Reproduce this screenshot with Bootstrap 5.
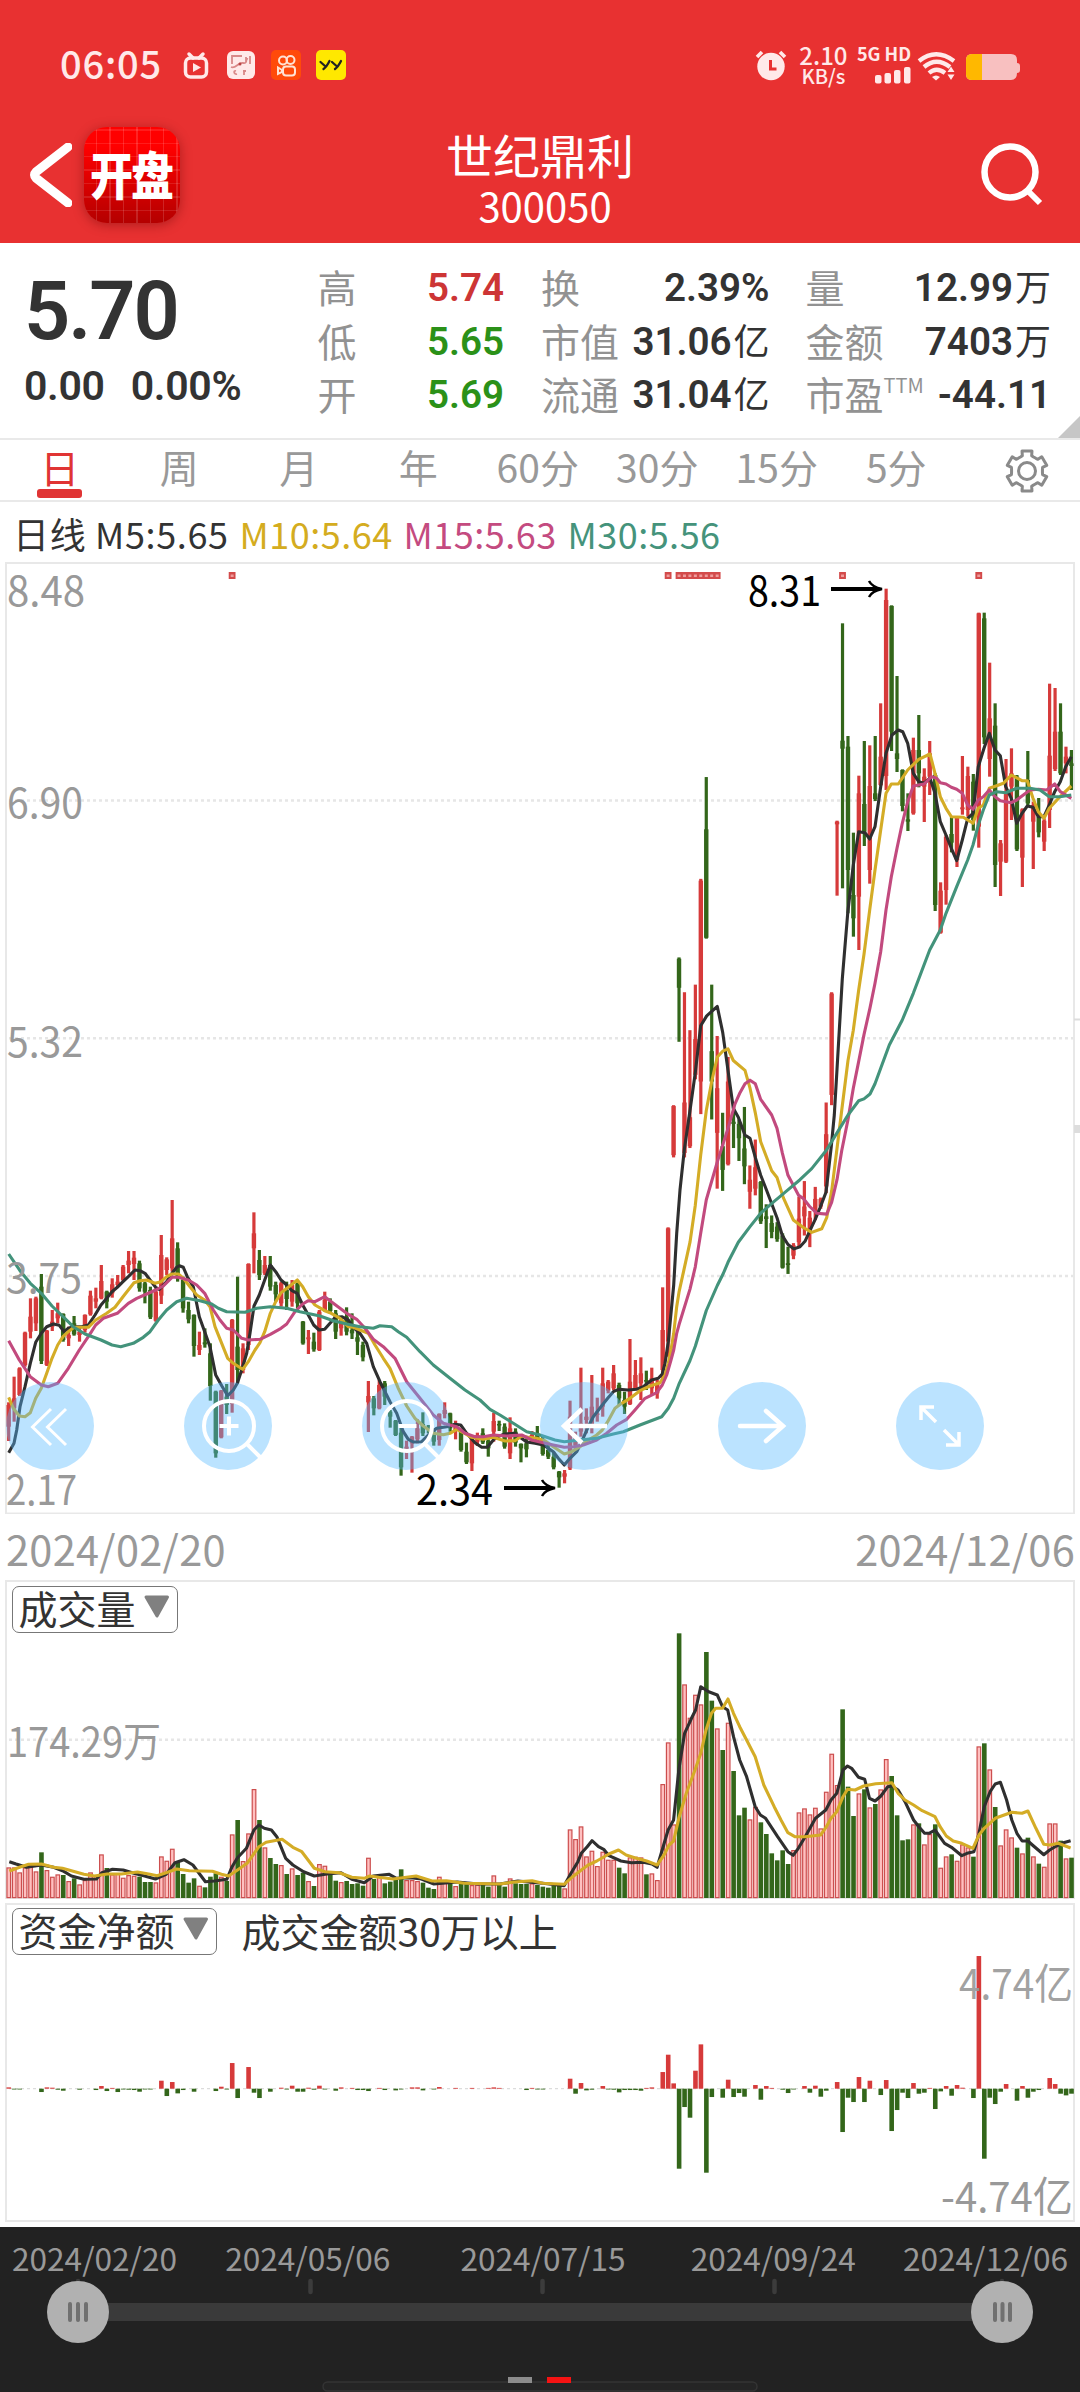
<!DOCTYPE html>
<html lang="zh-CN">
<head>
<meta charset="utf-8">
<meta name="viewport" content="width=device-width, initial-scale=1">
<title>世纪鼎利 300050</title>
<link href="https://cdn.jsdelivr.net/npm/bootstrap@5.3.0/dist/css/bootstrap.min.css" rel="stylesheet">
<style>
body{width:1080px;height:2392px;overflow:hidden;background:#fff;color:#333;font-family:"Noto Sans CJK SC","Liberation Sans",sans-serif;line-height:1}
svg{display:block;flex:none}
.app-head{height:243px;background:#e83131;color:#fff}
.status{height:86px;padding:43px 55px 0 60px;color:#ffe9e9}
.clock{font-size:38px;font-weight:500;width:123px;line-height:43px;letter-spacing:.8px;margin-top:-5px}
.net-rate{font-size:24px;font-weight:500;width:51px;text-align:center;margin-left:11px;margin-top:1px}
.net-rate div{line-height:21px}
.net-rate div+div{font-size:20px}
.net-kind{font-size:18px;font-weight:700;line-height:18px;white-space:nowrap}
.signal{gap:4px;margin-top:1px}
.wifi{margin-left:2px}
.bar-row{height:157px;padding:41px 35px 0 30px}
.logo{width:96px;height:96px;border-radius:23px;background:repeating-linear-gradient(90deg,transparent 0 12px,rgba(255,255,255,.14) 12px 13.4px),repeating-linear-gradient(0deg,transparent 0 12px,rgba(255,255,255,.11) 12px 13.4px),linear-gradient(#f00,#f00 20%,#b40000);box-shadow:0 2px 12px rgba(90,0,0,.4);font-size:43px;font-weight:900;letter-spacing:-2px;margin-left:12px}
.logo span{transform:translate(-1px,-2px) scaleY(1.18)}
.title-box{padding-right:124px;padding-left:45px}
.stock-name{font-size:47px;line-height:50px;margin-top:2px;margin-left:-2px}
.stock-code{font-size:40px;line-height:44px;margin-left:8px;margin-top:4px}
.quote{height:197px;border-bottom:2px solid #e9e9e9;padding:0 29px 0 24px}
.price-col{width:294px}
.din{font-family:Roboto,sans-serif;font-weight:600}
.last{font-size:81px;line-height:60px;margin-top:39px;letter-spacing:-2px}
.chg{font-size:41px;line-height:32px;margin-top:28px;gap:26px;letter-spacing:-.3px}
.kv-col{padding-top:17px}
.kv{height:53.5px;font-size:39px;white-space:nowrap}
.kv .key{color:#929292;line-height:40px;margin-top:-1px}
.kv .val{font-size:38.6px;line-height:40px;margin-top:3px}
.kv .val i{font:400 36px/0 "Noto Sans CJK SC",sans-serif;margin-left:2px}
.kv sup{font-size:20px;top:-.85em;line-height:0}
.up{color:#cd3535}.down{color:#2b9118}
.corner{width:0;height:0;border-left:22px solid transparent;border-bottom:22px solid #c6c6c6;right:0;bottom:0}
.periods{height:62px;border-bottom:2px solid #e9e9e9;color:#999;font-size:39px;padding-right:28px}
.periods div{width:119.5px;line-height:53px;height:60px;text-align:center;white-space:nowrap}
.periods .on{color:#e03434}
.periods .on::after{content:"";display:block;width:45px;height:9px;border-radius:3px;background:#e03434;margin:-4px auto 0}
.ma-row{height:60px;font-size:36px;padding:0 0 0 13px;gap:10.800px;white-space:nowrap;line-height:63px;letter-spacing:.5px}
.ma-row span:first-child{letter-spacing:.65px}
.dates{height:66px;color:#999;font-size:41.5px;padding:0 5px 0 6px;line-height:68px;letter-spacing:.3px}
.float-bar{left:6px;top:820px;gap:90px}
.round-btn{width:88px;height:88px;border-radius:50%;background:rgba(84,184,255,.4)}
.panel-top{left:11.5px;top:6px;gap:25px;font-size:39px}
.pick{height:47px;border:1.5px solid #777;border-radius:7px;padding:0 6px 4px 6px;gap:7px;background:#fff}
.range{height:165px;background:#222;color:#999}
.range-days{font-size:31.6px;line-height:34px;padding:13px 12px 3px 12px}
text{font-family:"Noto Sans CJK SC",sans-serif;font-size:41.5px;fill:#999}
</style>
<script src="https://cdn.jsdelivr.net/npm/bootstrap@5.3.0/dist/js/bootstrap.bundle.min.js"></script>
</head>
<body>
<header class="app-head">
  <div class="status d-flex align-items-start justify-content-between">
    <div class="d-flex align-items-center">
      <div class="clock">06:05</div>
      <svg width="163" height="44" viewBox="182 43 163 44">
        <rect x="184.500" y="58" width="21" height="19" rx="5" fill="none" stroke="#ffe9e9" stroke-width="3.500"/><path d="M188 52l4 4M202 52l-4 4" stroke="#ffe9e9" stroke-width="3.500" stroke-linecap="round" transform="translate(0 2)"/><path d="M192 63v9l8-4.500z" fill="#ffe9e9"/>
        <rect x="226" y="51" width="28" height="28" rx="6" fill="#ffe9e9"/><path d="M231 64V56h10M230 67c5 2 7-5 12-4s2-5 5-4M245 57v5M249 56v8M235 71c-3-1-2 4 1 3M243 70v5M242 71h3" fill="none" stroke="#d98888" stroke-width="1.800"/><circle cx="239" cy="64" r="1.500" fill="#b44"/>
        <rect x="270" y="50" width="30" height="30" rx="5" fill="#ff4a0a"/><g fill="none" stroke="#ffe3d4" stroke-width="2"><circle cx="282" cy="60.500" r="4"/><circle cx="289.500" cy="60" r="4"/><rect x="282" y="66.500" width="12" height="9" rx="3"/><path d="M281 70l-4-2.500v6.500l4-2z"/></g>
        <rect x="315" y="50" width="30" height="30" rx="5" fill="#ffe800"/><path d="M319.500 62l4.500 4M328.500 61q-3 6-6 8M331 62l4.500 4M340 61q-3 6-6 8" stroke="#222" stroke-width="2.300" stroke-linecap="round" fill="none"/>
      </svg>
    </div>
    <div class="d-flex align-items-start">
      <svg width="32" height="44" viewBox="755 43 32 44"><circle cx="771" cy="66.500" r="13.700" fill="#ffe9e9"/><path d="M770.500 60v9h6" stroke="#e83131" stroke-width="3" fill="none"/><path d="M757 57l5-5M785 57l-5-5" stroke="#ffe9e9" stroke-width="3.600"/></svg>
      <div class="net-rate"><div>2.10</div><div>KB/s</div></div>
      <div class="signal ms-2 d-flex flex-column align-items-end"><div class="net-kind">5G HD</div>
        <svg width="36" height="18" viewBox="0 0 36 18"><g fill="#ffe9e9"><rect y="9" width="6.500" height="8.500" rx="2"/><rect x="9.500" y="7" width="6.500" height="10.500" rx="2"/><rect x="19" y="4" width="6.500" height="13.500" rx="2"/><rect x="29" y="1" width="6.500" height="16.500" rx="2"/></g></svg></div>
      <svg class="wifi" width="112" height="44" viewBox="913 43 112 44"><g fill="none" stroke="#ffe9e9" stroke-width="4.300"><path d="M919 61q17-13.500 35 0"/><path d="M924 67q12.500-10.500 26 0"/><path d="M929 73q7.500-6.500 16 0"/></g><path d="M932 77q4-3 8 0l-4 3.500z" fill="#ffe9e9"/><path d="M951 66.500l3.500 5.500h-7zM951 80l3.500-5.500h-7z" fill="#ffe9e9"/>
        <path d="M972 54h39q6 0 6 6v3q3 0 3 3v4q0 3-3 3q0 7-6 7h-39q-6 0-6-6v-14q0-6 6-6z" fill="#f8c0c0"/><path d="M982 54h-10q-6 0-6 6v14q0 6 6 6h10z" fill="#ffb800"/></svg>
    </div>
  </div>
  <div class="bar-row d-flex align-items-start">
    <svg class="mt-3" width="42" height="64" viewBox="0 0 42 64"><path d="M38 4L6 29q-3 3 0 6L38 60" fill="none" stroke="#fff" stroke-width="9" stroke-linecap="round"/></svg>
    <div class="logo d-flex align-items-center justify-content-center"><span>开盘</span></div>
    <div class="title-box flex-grow-1 text-center"><div class="stock-name">世纪鼎利</div><div class="stock-code">300050</div></div>
    <svg class="mt-3" width="64" height="66" viewBox="1 1 64 66"><circle cx="30" cy="30" r="25.500" fill="none" stroke="#fff" stroke-width="6.500"/><path d="M47 48L60 61" stroke="#fff" stroke-width="6"/></svg>
  </div>
</header>

<section class="quote d-flex position-relative">
  <div class="price-col"><div class="din last">5.70</div><div class="din chg d-flex"><span>0.00</span><span>0.00%</span></div></div>
  <div class="kv-col" style="width:187px">
    <div class="kv d-flex justify-content-between align-items-center"><span class="key">高</span><span class="val din up">5.74</span></div>
    <div class="kv d-flex justify-content-between align-items-center"><span class="key">低</span><span class="val din down">5.65</span></div>
    <div class="kv d-flex justify-content-between align-items-center"><span class="key">开</span><span class="val din down">5.69</span></div>
  </div>
  <div class="kv-col" style="width:229px;margin-left:37px">
    <div class="kv d-flex justify-content-between align-items-center"><span class="key">换</span><span class="val din">2.39%</span></div>
    <div class="kv d-flex justify-content-between align-items-center"><span class="key">市值</span><span class="val din">31.06<i>亿</i></span></div>
    <div class="kv d-flex justify-content-between align-items-center"><span class="key">流通</span><span class="val din">31.04<i>亿</i></span></div>
  </div>
  <div class="kv-col" style="width:246px;margin-left:36px">
    <div class="kv d-flex justify-content-between align-items-center"><span class="key">量</span><span class="val din">12.99<i>万</i></span></div>
    <div class="kv d-flex justify-content-between align-items-center"><span class="key">金额</span><span class="val din">7403<i>万</i></span></div>
    <div class="kv d-flex justify-content-between align-items-center"><span class="key">市盈<sup>TTM</sup></span><span class="val din">-44.11</span></div>
  </div>
  <div class="corner position-absolute"></div>
</section>

<nav class="periods d-flex">
  <div class="on">日</div><div>周</div><div>月</div><div>年</div><div>60分</div><div>30分</div><div>15分</div><div>5分</div>
  <svg class="ms-auto" style="margin-top:6px" width="50" height="50" viewBox="-25 -25 50 50"><g fill="none" stroke="#8a8a8a" stroke-width="3" stroke-linejoin="round"><circle r="8.500"/><path id="gear"/></g></svg>
</nav>
<div class="ma-row d-flex"><span>日线 M5:5.65</span><span style="color:#d4ac20">M10:5.64</span><span style="color:#c44b80">M15:5.63</span><span style="color:#45937b">M30:5.56</span></div>

<section class="position-relative">
  <svg id="price" width="1080" height="952" viewBox="0 562 1080 952"></svg>
  <div class="float-bar d-flex position-absolute">
    <div class="round-btn"><svg width="88" height="88" fill="none" stroke="#fff" stroke-width="3"><path d="M45 27L26.500 45 45 63M60 27L41.500 45 60 63"/></svg></div>
    <div class="round-btn"><svg width="88" height="88" fill="none" stroke="#fff" stroke-width="4"><circle cx="45" cy="44" r="25"/><path d="M63 62l13 13M35.500 44h19M45 34.500v19"/></svg></div>
    <div class="round-btn"><svg width="88" height="88" fill="none" stroke="#fff" stroke-width="4"><circle cx="45" cy="44" r="25"/><path d="M63 62l13 13M36.500 44h18"/></svg></div>
    <div class="round-btn"><svg width="88" height="88" fill="none" stroke="#fff" stroke-width="4.500"><path d="M67 44H24M42 27L24 44 42 61"/></svg></div>
    <div class="round-btn"><svg width="88" height="88" fill="none" stroke="#fff" stroke-width="4.500" stroke-linecap="round"><path d="M22 44H65M48 29L65 44 48 59"/></svg></div>
    <div class="round-btn"><svg width="88" height="88" fill="none" stroke="#fff" stroke-width="3.500"><path d="M40 40L25 25M25 38V25H38M48 48L63 63M63 50V63H50"/></svg></div>
  </div>
</section>
<div class="dates d-flex justify-content-between"><span>2024/02/20</span><span>2024/12/06</span></div>

<section class="position-relative">
  <svg id="volume" width="1080" height="322" viewBox="0 1580 1080 322"></svg>
  <div class="panel-top d-flex align-items-center position-absolute"><div class="pick d-flex align-items-center">成交量<svg width="28" height="26" viewBox="0 0 28 26"><path d="M3 2h21.500l-10.500 19z" fill="#808080" stroke="#808080" stroke-width="3" stroke-linejoin="round"/></svg></div></div>
</section>
<section class="position-relative">
  <svg id="funds" width="1080" height="325" viewBox="0 1902 1080 325"></svg>
  <div class="panel-top d-flex align-items-center position-absolute"><div class="pick d-flex align-items-center">资金净额<svg width="28" height="26" viewBox="0 0 28 26"><path d="M3 2h21.500l-10.500 19z" fill="#808080" stroke="#808080" stroke-width="3" stroke-linejoin="round"/></svg></div><span style="margin-top:-3px">成交金额30万以上</span></div>
</section>

<footer class="range">
  <div class="range-days d-flex justify-content-between"><span>2024/02/20</span><span style="margin-left:1px">2024/05/06</span><span style="margin-left:23px">2024/07/15</span><span style="margin-left:18px">2024/09/24</span><span>2024/12/06</span></div>
  <svg width="1080" height="115" viewBox="0 2277 1080 115">
    <g stroke="#3c3c3c" stroke-width="4.500" stroke-linecap="round"><path d="M78 2281v11M310.500 2281v11M542.500 2281v11M774.500 2281v11M1002 2281v11"/></g>
    <rect x="78" y="2303" width="924" height="18" fill="#3a3a3a"/>
    <circle cx="78" cy="2312" r="31" fill="#b1b1b1"/><circle cx="1002" cy="2312" r="31" fill="#b1b1b1"/>
    <path d="M70 2304v16M78 2304v16M86 2304v16M995 2304v16M1002.500 2304v16M1010 2304v16" stroke="#707070" stroke-width="4" stroke-linecap="round"/>
    <rect x="323" y="2382" width="434" height="9" rx="4.500" fill="#252525" stroke="#343434" stroke-width="1.500"/>
    <rect x="508" y="2377" width="24" height="6" fill="#8c8c8c"/><rect x="547" y="2377" width="24" height="6" fill="#f51313"/>
  </svg>
</footer>

<script>
const RED='#d63a3a', GREEN='#33661a', STEP=5.45, X0=8.67;
const cx=i=>X0+STEP*i;
const rect=(x,y,w,h,f,extra='')=>`<rect x="${x.toFixed(2)}" y="${y.toFixed(2)}" width="${w}" height="${h.toFixed(2)}" fill="${f}" ${extra}/>`;
const frame=(y,h)=>`<rect x="6" y="${y}" width="1068" height="${h}" fill="none" stroke="#e8e8e8" stroke-width="2"/>`;
const dots=y=>`<path d="M9 ${y}H1073" stroke="#e6e6e6" stroke-width="2.500" stroke-dasharray="3 3"/>`;
const label=(x,y,s,w,extra='')=>`<text x="${x}" y="${y}" textLength="${w}" lengthAdjust="spacingAndGlyphs" ${extra}>${s}</text>`;

// Candles: colour, high, body top, body bottom, low; each block has its own origin and scale
const blocks=[
[1150,3,`r757,765,830,873 r680,745,775,815 r652,655,735,738 r545,548,645,650 r445,500,545,565 r440,445,520,543 g372,410,633,642 r540,542,645,648 r480,515,530,543 r458,490,505,520 g490,492,570,575 r530,555,565,588 g498,520,553,557 r530,545,555,575 r493,495,540,548 r422,437,493,497 r413,445,455,475 r345,393,445,448 g422,425,455,475 r385,403,430,443 r375,395,405,410 r345,350,390,395 r303,332,345,370 r303,323,342,390 g332,340,415,425 g395,400,425,460 g410,420,502,507 r415,425,512,515 r255,315,437,462 r322,328,360,375 r150,265,355,365 g277,295,385,395 g380,390,475,488 g455,480,508,520 g493,495,588,620 r545,585,600,615 g535,577,583,593 g580,610,708,752 g722,725,910,923 r720,722,862,865 g702,740,765,792 r507,510,762,788 g380,590,660,700 r580,595,660,670 r340,342,585,600 r187,250,295,370 g300,330,375,390 r318,345,370,375 g318,345,410,422 g395,405,433,455 r395,400,460,470 g395,420,447,480 r390,405,455,470 g395,400,460,475 g513,515,580,584 r540,562,568,612 g548,575,598,605 r480,485,600,603 r425,450,480,485 g445,455,483,490 g480,490,545,567 r500,510,535,557 g472,500,545,556 g490,540,550,567 g545,562,575,615 g575,585,622,634 r693,738,757,846 g738,745,775,796 r690,705,775,778 g693,700,740,765 g780,785,800,833 g810,812,855,858 g830,848,952,977 r872,890,905,927 r858,860,880,968 r808,835,868,880 g787,822,850,858 g825,835,840,850 g835,845,875,887 r790,792,870,887 r757,780,792,805 g788,790,835,845 r812,825,842,868 g840,843,900,905 g878,905,937,942 r855,858,940,963 r848,855,875,888 g835,850,877,882 g868,872,895,920 r788,813,845,875 g812,822,826,843 g820,830,890,896 r802,835,910,927 g835,845,878,890 g880,882,895,937 g865,880,898,922 r843,855,870,880 g828,850,870,880 g855,875,912,917 g885,900,920,927 g905,920,952,958 g963,965,982,1013 r960,970,980,1000 r752,800,955,960 r845,860,885,905 r653,820,845,860 r775,800,810,850 r675,770,830,850 r743,790,795,815 r653,700,770,800 r690,695,722,730 r645,670,715,720 g698,705,745,765 g725,750,770,792 r567,695,762,765 r630,675,715,720 r622,670,700,750 g662,690,695,720 r653,685,715,735 r690,700,730,746 r412,540,660,690 r232,235,575,620`],
[740,2.24,`r818,820,930,935 g487,490,555,676 r565,812,925,935 r650,845,910,914 r548,670,750,760 r311,315,765,838 g83,200,443,445 g548,697,765,850 r663,780,880,1005 g835,910,963,1010 r710,765,950,953 g822,855,860,914 g850,860,892,943 g822,915,955,995 r953,985,1012,1050 r895,957,1005,1020 g988,990,1078,1084 g1040,1067,1073,1138 g1065,1082,1102,1116 g1080,1090,1118,1124 g1105,1110,1182,1184 g1135,1172,1176,1196 r1127,1132,1155,1163 r1023,1072,1125,1135 r988,1045,1067,1110 r1055,1070,1105,1136 r1001,1028,1055,1075 r1025,1028,1045,1050 r812,883,1000,1015 r565,568,795,818`],
[560,3,`r782,785,793,1007 g190,542,566,985 g528,560,930,1060 g818,1005,1075,1130 r647,700,1010,1170 g543,732,815,858 r556,678,930,971 g528,700,717,723 r430,590,675,678 r86,120,648,690 g136,138,515,573 g348,580,597,636 g628,630,738,754 g700,778,785,813 r533,570,760,764 g465,570,640,682 r625,650,680,786 r543,580,650,705 g640,645,1035,1053 r967,992,1118,1121 r825,830,990,1034 g770,822,848,877 r768,770,900,921 r588,742,748,764 r620,648,750,770 g642,665,780,812 r158,160,800,863 g158,175,532,552 r308,475,597,650 g430,497,915,981 r840,850,905,1008 r597,695,905,909 r565,640,680,780 g645,650,868,873 r745,748,893,981 g573,660,730,740 r725,735,785,927 g714,770,817,832 r775,782,845,873 r371,587,750,804 r384,515,627,633 g430,515,640,645 r560,590,610,640 g570,610,618,690`]];
const candles=[];
for(const [o,k,s] of blocks) for(const t of s.split(' ')) candles.push([t[0],...t.slice(1).split(',').map(v=>o+v/k)]);

// Averages: [origin x, origin y, scale x, scale y, points]
const A=[0,1150,3,3],B=[340,1150,3,3],C=[640,740,3,2.24],D=[820,560,3,3];
const curve=(color,parts)=>{
  const p=[];
  for(const [[ox,oy,kx,ky],s] of parts) for(const t of s.split(' ')){const [x,y]=t.split(',').map(Number);p.push((ox+x/kx).toFixed(1)+','+(oy+y/ky).toFixed(1));}
  return `<polyline points="${p.join(' ')}" fill="none" stroke="${color}" stroke-width="3.100" stroke-linejoin="round"/>`;
};
let s=frame(563,950.500)+dots(800.5)+dots(1038.3)+dots(1276);
s+='<path d="M1074 1019.500H1080" stroke="#ddd" stroke-width="2"/><path d="M1074 1129H1080" stroke="#ddd" stroke-width="8"/>';
candles.forEach(([c,h,t,b,l],i)=>{const f=c=='r'?RED:GREEN;s+=rect(cx(i)-1.6,h,3.2,l-h,f)+rect(cx(i)-2.2,t,4.4,Math.max(b-t,1.5),f);});
[41,121,123,124,125,126,127,128,129,130,153,178].forEach(i=>{s+=rect(cx(i)-3.4,572,6.8,7,'#d34b4b')+rect(cx(i)-1.5,574.5,3,2.5,'#ef9c9c');});
s+=curve('#2f2f2f',[[A,'26,908 42,880 50,840 60,770 75,710 91,640 107,577 124,550 140,530 160,522 178,526 192,545 205,535 222,530 245,530 265,525 285,495 303,465 320,445 336,425 352,412 369,395 385,380 405,360 420,362 435,370 450,390 467,412 478,418 500,395 516,370 530,352 538,347 550,352 562,380 580,410 598,500 614,545 630,590 647,675 665,707 683,737 700,720 712,700 725,660 740,610 750,550 762,468 778,435 794,390 811,345 827,365 843,390 860,405 876,422 892,430 908,465 925,495 941,525 957,540 974,538 990,520 1006,502 1025,500 1045,510'],[B,'40,532 60,550 80,580 100,650 120,695 135,725 150,755 170,790 190,845 205,868 220,876 245,875 265,855 290,835 320,830 345,823 362,825 380,850 405,878 425,892 442,892 462,868 478,858 495,852 525,850 540,862 560,876 585,880 610,885 625,895 640,905 655,925 673,945 690,925 710,905 725,875 745,830 760,800 787,765 803,745 820,725 836,718 865,720 890,718 910,710 935,690 955,685 967,672 975,640 985,575 993,490 1001,405 1010,250 1020,120'],[C,'133,918 150,830 166,745 182,640 200,618 215,608 232,597 248,655 264,740 280,825 295,845 315,885 330,892 346,935 362,975 378,1005 411,1070 427,1110 444,1130 462,1140 480,1135 495,1123 509,1100 525,1075 540,1048 558,1013 574,910 583,840 591,738 607,535'],[D,'83,1060 100,915 116,815 135,818 149,837 165,800 182,680 198,580 216,525 235,510 248,515 263,550 280,640 296,665 312,670 330,655 345,700 361,785 378,825 394,865 410,902 427,840 443,775 459,760 475,620 492,565 508,520 525,570 541,587 557,680 574,715 590,790 606,760 622,738 639,742 655,770 672,770 688,735 704,695 721,665 737,620 754,590']]);
s+=curve('#d4ac26',[[A,'26,742 40,775 58,798 75,800 91,788 107,745 124,715 140,670 156,625 173,585 189,560 205,545 222,532 265,532 287,510 320,490 345,472 369,440 385,420 402,398 420,392 440,390 465,400 483,395 500,380 516,372 535,372 550,385 570,410 590,435 614,450 630,470 645,530 665,580 683,625 700,640 728,658 745,635 765,600 780,578 794,545 811,490 827,455 843,428 865,412 892,390 908,410 925,440 945,465 974,482 990,488 1020,505 1045,530'],[B,'40,532 60,540 85,550 105,585 130,625 150,655 175,715 200,768 225,805 250,828 280,850 310,854 330,850 350,838 370,848 395,862 430,868 460,862 495,873 525,872 545,858 565,862 590,865 615,872 640,890 673,912 695,905 720,890 745,870 770,855 787,840 803,815 825,775 845,760 870,745 900,722 930,708 960,698 975,675 985,640 993,600 1001,550 1010,470'],[C,'117,1237 150,1125 166,1042 182,930 199,830 215,765 232,710 248,697 264,692 280,718 315,740 330,780 346,835 362,900 395,965 411,980 430,1025 460,1075 490,1092 515,1103 545,1095 560,1070 575,1010 591,915 605,830 624,718 640,650 656,560 672,480'],[D,'149,1050 165,930 182,810 198,700 214,672 235,672 263,630 296,598 330,582 345,640 361,710 378,745 394,770 430,772 459,790 475,745 490,735 508,685 530,677 550,670 574,645 606,662 622,662 639,715 655,755 672,775 688,745 720,710 754,678']]);
s+=curve('#c24a7e',[[A,'26,572 58,630 91,680 124,705 145,710 173,700 205,655 238,600 265,560 287,525 310,505 352,490 385,460 410,445 440,432 467,420 490,408 516,382 535,382 565,390 590,405 614,430 640,480 660,510 680,535 700,540 725,565 745,570 780,568 811,553 843,535 860,522 885,485 908,462 925,452 945,455 974,440 1000,460'],[B,'0,475 20,490 50,508 75,535 100,568 130,590 165,625 200,695 240,745 280,795 310,820 350,830 375,850 405,860 430,860 460,855 500,858 545,855 575,870 610,878 640,885 673,892 700,890 730,885 770,870 800,850 830,825 860,808 885,780 915,745 950,728 967,705 980,675 993,630 1001,600 1010,550'],[C,'117,1310 150,1230 166,1180 182,1105 199,1030 232,945 264,870 285,815 300,790 315,770 330,762 346,770 362,805 395,840 411,870 427,925 444,975 476,1020 490,1027 509,1045 530,1060 560,1062 575,1035 591,985 605,920 624,850 640,780 656,720 672,660 690,600 705,545'],[D,'182,1175 198,1050 214,950 231,865 247,790 263,725 280,678 312,672 335,650 350,655 361,668 378,672 394,682 410,688 427,700 443,735 459,748 475,720 490,710 508,690 525,710 541,722 574,728 590,720 606,708 630,690 655,688 680,690 704,672 721,695 754,715']]);
s+=curve('#43937b',[[A,'26,312 60,362 91,400 124,430 156,468 189,500 222,532 255,552 303,570 336,585 362,590 400,580 430,562 450,545 475,510 500,480 530,455 560,445 600,452 635,462 655,475 680,485 735,487 770,475 811,470 860,475 900,485 960,498 1000,512'],[B,'20,522 60,530 100,535 120,527 155,530 175,545 200,562 240,605 280,645 330,685 375,720 420,750 450,778 480,795 520,820 560,845 600,855 645,870 673,875 720,870 770,865 820,852 850,845 900,825 965,800 985,775 1001,745 1018,700'],[C,'150,1390 166,1358 199,1278 232,1222 250,1195 264,1170 295,1125 330,1090 362,1060 400,1035 440,1010 480,985 515,960 558,920 591,880 624,840 656,808 672,804 690,793 705,770'],[D,'182,1525 208,1455 247,1380 280,1300 312,1215 329,1170 361,1110 378,1060 410,980 443,900 459,855 475,795 490,750 508,705 530,695 557,698 590,685 630,685 660,690 688,710 720,710 754,705']]);
s+=label(7,606,'8.48',78)+label(7,818,'6.90',76)+label(7,1056.5,'5.32',76)+label(6,1292.5,'3.75',76)+label(6,1504.5,'2.17',71);
s+=label(748,606,'8.31',73,'style="fill:#000"')+label(416,1504.5,'2.34',77,'style="fill:#000"');
const arrow=(x,y)=>`<path d="M${x} ${y}h47" stroke="#000" stroke-width="4"/><path d="M${x+38} ${y-8}q3 6 13 8q-10 2-13 8" fill="none" stroke="#000" stroke-width="2.500"/>`;
s+=arrow(831,589)+arrow(504,1488);
price.innerHTML=s;

// Volume bar tops
const vol='922 922 937 922 914 934 877 930 950 943 945 963 955 973 960 937 945 883 924 943 940 953 945 947 950 966 966 967 889 902 866 905 942 968 955 977 982 950 940 950 963 823 780 903 820 687 780 862 894 912 915 942 925 945 938 963 978 912 917 942 962 966 963 972 970 977 893 957 950 970 965 960 928 960 960 963 968 983 987 950 962 970 978 972 972 975 974 970 980 946 975 980 955 970 972 972 970 975 980 983 977 977 985 808 837 799 889 872 918 875 899 899 923 940 892 890 892 943 940 960 672 547 793 220 373 473 404 433 276 422 505 570 488 633 766 743 778 740 787 822 880 901 871 912 870 757 745 763 743 805 695 581 675 448 680 768 700 688 742 732 688 597 648 766 841 838 793 790 853 822 793 923 889 883 902 853 862 890 559 550 628 741 856 808 832 863 880 833 889 911 920 790 790 842 895 893'.split(' ').map(v=>1560+v/3);
s=frame(1581,317)+dots(1739.7);
vol.forEach((y,i)=>{s+=candles[i][0]=='r'?rect(cx(i)-1.7,y+.6,3.6,1898-y-1,'#ffc0c0','stroke="#cc4e4e" stroke-width="1.200"'):rect(cx(i)-2.2,y,4.6,1898-y,GREEN);});
const E=[0,1560,2.8,3],F=[540,1560,2.904,3];
s+=curve('#2f2f2f',[[E,'26,905 45,912 75,922 116,915 150,922 175,932 200,948 235,958 270,957 285,938 315,928 345,930 375,940 405,948 435,957 465,943 490,908 515,899 540,915 575,965 600,963 635,958 650,920 665,893 690,865 711,810 725,795 740,805 760,810 775,830 800,895 820,915 850,935 880,948 915,942 955,938 985,958 1020,968 1045,948 1090,943 1110,955 1150,953 1180,957 1215,972 1280,966 1340,972 1400,972 1450,963 1500,968'],[F,'8,970 70,977 90,940 110,905 120,880 137,860 151,842 170,860 185,868 200,887 235,903 265,908 300,907 325,912 340,922 355,870 372,810 388,780 403,630 420,520 440,475 452,450 467,380 490,395 515,405 530,440 545,450 562,530 580,600 600,650 625,740 640,765 655,775 690,830 720,875 735,886 750,865 770,830 800,775 830,750 845,720 862,700 880,630 893,618 905,625 925,652 943,658 957,715 973,723 990,708 1010,680 1022,678 1040,690 1060,725 1085,780 1100,800 1117,820 1130,820 1147,810 1175,850 1195,862 1225,887 1240,880 1260,875 1275,820 1290,740 1307,695 1322,672 1337,667 1355,720 1370,780 1385,820 1400,843 1417,843 1430,855 1463,884 1480,870 1500,858 1520,848 1541,842']]);
s+=curve('#d4ac26',[[E,'26,933 55,922 80,913 116,912 150,922 175,925 235,943 265,948 300,942 340,942 385,936 420,943 440,947 465,938 495,927 530,932 595,934 620,943 640,948 665,930 692,910 725,860 745,847 790,838 820,862 845,875 880,925 910,935 950,938 985,952 1020,955 1035,948 1060,952 1100,957 1165,948 1210,963 1250,962 1300,970 1400,972 1440,966 1490,962'],[F,'8,970 70,973 95,950 120,930 140,915 165,903 200,882 228,870 250,885 275,893 310,903 340,915 360,885 375,855 388,843 403,775 425,700 450,630 467,580 482,510 498,460 510,445 530,445 546,417 562,460 580,500 600,540 625,590 650,675 680,740 700,780 720,818 740,830 770,830 815,825 830,803 845,775 862,755 880,710 893,688 915,690 940,678 975,671 1022,668 1040,700 1060,720 1085,735 1110,752 1147,770 1162,800 1180,828 1200,843 1225,850 1257,865 1275,825 1290,805 1322,775 1370,757 1400,760 1417,753 1440,805 1463,853 1480,855 1505,850 1541,864']]);
s+=label(7,1757,'174.29万',154);
volume.innerHTML=s;

// Net inflow by day index, in thirds of a pixel
const net={0:4,1:-1,2:-1,6:-10,7:4,8:3,9:-3,10:-6,13:-3,16:-4,17:8,18:-7,19:2,20:-10,21:-2,22:-3,23:-4,24:-9,25:-2,26:-2,28:24,29:-22,30:20,31:-14,32:-4,34:-9,38:-7,39:6,40:-2,41:77,42:-28,44:65,45:-12,46:-28,48:-9,50:3,51:-2,52:9,53:-9,54:-9,55:3,56:-3,57:9,58:-2,60:-6,61:4,63:2,64:-4,65:-4,66:-7,68:2,69:-4,71:-5,72:-2,74:4,75:4,76:-5,78:-2,79:5,82:2,85:2,88:2,89:4,90:2,95:-4,96:2,97:-1,98:-2,103:30,104:-15,105:17,106:-5,107:-3,109:8,110:-2,111:-3,112:-11,113:-4,114:-4,115:-4,116:-6,117:2,118:4,120:50,121:102,122:16,123:-240,124:-55,125:-87,126:54,127:133,128:-252,129:-25,131:-27,132:27,133:-25,134:-13,135:-24,137:11,138:-33,139:8,140:1,142:-3,143:-13,144:-2,146:8,147:-12,148:9,149:-24,150:-6,152:20,153:-130,154:-27,155:-40,156:35,157:-40,158:24,160:-19,161:26,162:-127,163:-64,164:-12,165:-28,166:17,167:-15,168:-12,169:2,170:-61,171:-8,172:8,173:-21,174:11,175:3,177:-28,178:398,179:-210,180:-27,181:-46,182:-9,183:14,185:-36,186:8,187:-27,188:-9,189:-4,191:32,192:14,193:-15,194:-20,195:-15};
s=frame(1904,317)+'<path d="M9 2088.600H1073" stroke="#dcdcdc" stroke-width="1.300" stroke-dasharray="3 3"/>';
for(const [i,v] of Object.entries(net)){const h=Math.max(Math.abs(v)/3,.8);s+=rect(cx(+i)-2.2,v>0?2088.7-h:2088.7,4.6,h,v>0?RED:GREEN);}
s+=label(959,1998.5,'4.74亿',114,'fill-opacity=".93"')+label(941,2211.5,'-4.74亿',132);
funds.innerHTML=s;

// Six-tooth gear outline
let g='';
for(let i=0;i<6;i++){const a=i*60-90;[[-25,15.5],[-17,16],[-14,20.5],[14,20.5],[17,16],[25,15.5]].forEach(([d,r],j)=>{const q=(a+d)*Math.PI/180;g+=(i||j?'L':'M')+(r*Math.cos(q)).toFixed(2)+' '+(r*Math.sin(q)).toFixed(2);});}
gear.setAttribute('d',g+'Z');
</script>
</body>
</html>
